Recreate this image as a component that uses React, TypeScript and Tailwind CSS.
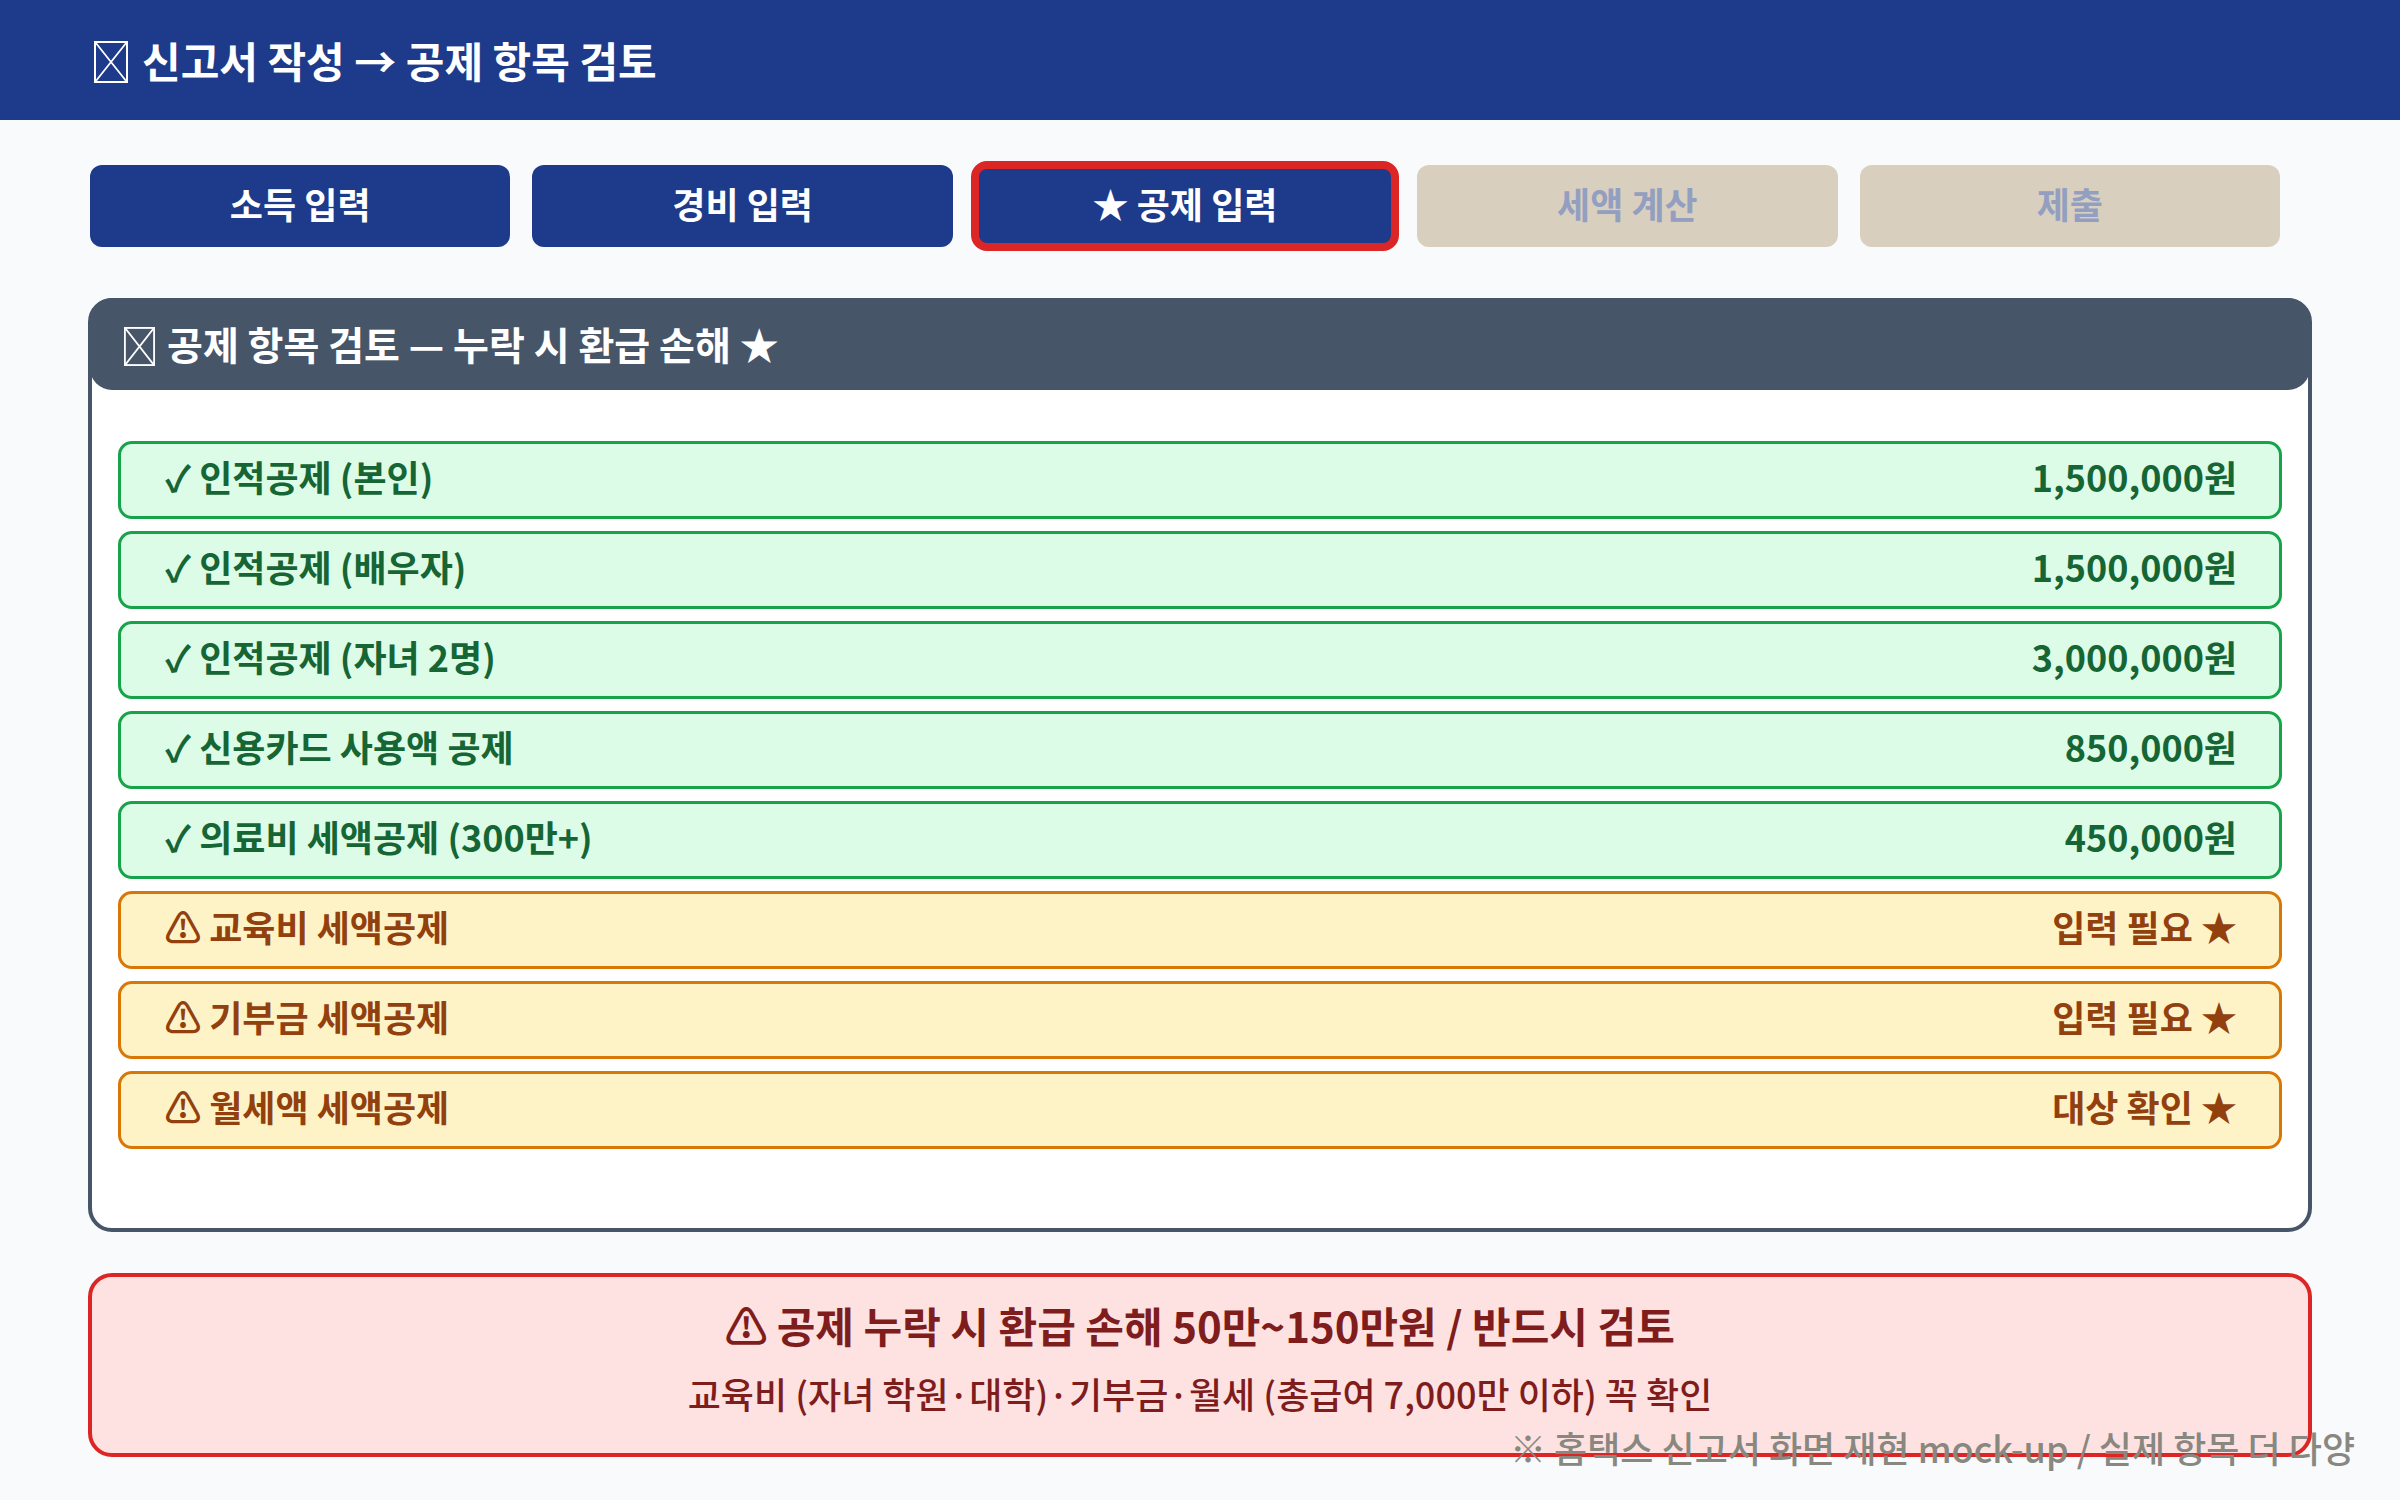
type Step = { label: string; state: "done" | "current" | "todo" };
type Deduction = { label: string; value: string; ok: boolean };

const steps: Step[] = [
  { label: "소득 입력", state: "done" },
  { label: "경비 입력", state: "done" },
  { label: "★ 공제 입력", state: "current" },
  { label: "세액 계산", state: "todo" },
  { label: "제출", state: "todo" },
];

const deductions: Deduction[] = [
  { label: "✓ 인적공제 (본인)", value: "1,500,000원", ok: true },
  { label: "✓ 인적공제 (배우자)", value: "1,500,000원", ok: true },
  { label: "✓ 인적공제 (자녀 2명)", value: "3,000,000원", ok: true },
  { label: "✓ 신용카드 사용액 공제", value: "850,000원", ok: true },
  { label: "✓ 의료비 세액공제 (300만+)", value: "450,000원", ok: true },
  { label: "⚠ 교육비 세액공제", value: "입력 필요 ★", ok: false },
  { label: "⚠ 기부금 세액공제", value: "입력 필요 ★", ok: false },
  { label: "⚠ 월세액 세액공제", value: "대상 확인 ★", ok: false },
];

const stepStyles = {
  done: "bg-[#1e3a8a] text-white",
  current: "bg-[#1e3a8a] text-white outline-8 -outline-offset-4 outline-[#dc2626]",
  todo: "bg-[#d9cfbe] text-[#929fc0]",
};

function CrossedBox({ className }: { className: string }) {
  return (
    <svg viewBox="0 0 34 42" preserveAspectRatio="none" fill="none" stroke="currentColor" className={className} aria-hidden="true">
      <rect x="1" y="1" width="32" height="40" strokeWidth="2" />
      <path d="M1.5 1.5 32.5 40.5M32.5 1.5 1.5 40.5" strokeWidth="1.8" />
    </svg>
  );
}

export default function App() {
  return (
    <div className="relative min-h-screen bg-[#f9fafc] font-['Noto_Sans_CJK_KR',sans-serif]">
      <header className="flex h-[120px] items-center bg-[#1e3a8a] px-[94px] text-white">
        <h1 className="flex items-center gap-[14px] text-[42px] leading-[60px] font-bold">
          <CrossedBox className="mt-1 h-[42px] w-[34px]" />
          신고서 작성 → 공제 항목 검토
        </h1>
      </header>

      <nav className="mt-[45px] mr-[120px] ml-[90px] grid grid-cols-5 gap-[22px]" aria-label="신고 단계">
        {steps.map((s) => (
          <button
            key={s.label}
            type="button"
            disabled={s.state === "todo"}
            aria-current={s.state === "current" ? "step" : undefined}
            className={`h-[82px] rounded-xl pb-1.5 text-[36px] leading-[52px] font-bold ${stepStyles[s.state]}`}
          >
            {s.label}
          </button>
        ))}
      </nav>

      <main className="px-[88px]">
        <section className="mt-[51px] rounded-[24px] border-4 border-[#475569] bg-white">
          <h2 className="-mx-[2px] -mt-1 flex h-[92px] items-center gap-3 rounded-[22px] bg-[#475569] px-[34px] pt-1 text-[39px] leading-[56px] font-bold text-white">
            <CrossedBox className="h-[39px] w-[31px]" />
            <span className="pb-1.5">공제 항목 검토 — 누락 시 환급 손해 ★</span>
          </h2>
          <ul className="flex flex-col gap-3 px-[26px] pt-[51px] pb-[79px]">
            {deductions.map((d) => (
              <li
                key={d.label}
                className={`flex h-[78px] items-center justify-between rounded-[14px] border-3 pr-[42px] pb-2 pl-[44px] text-[36px] leading-[52px] font-bold ${
                  d.ok
                    ? "border-[#16a34a] bg-[#dcfce7] text-[#166534]"
                    : "border-[#d97706] bg-[#fef3c7] text-[#92400e]"
                }`}
              >
                <span>{d.label}</span>
                <span>{d.value}</span>
              </li>
            ))}
          </ul>
        </section>

        <section className="mt-[41px] flex h-[184px] flex-col items-center rounded-[24px] border-4 border-[#dc2626] bg-[#fee2e2] pt-[18px] text-[#7f1d1d]">
          <p className="text-[42px] leading-[60px] font-bold">⚠ 공제 누락 시 환급 손해 50만~150만원 / 반드시 검토</p>
          <p className="mt-3 text-[36px] leading-[52px] font-medium">교육비 (자녀 학원·대학)·기부금·월세 (총급여 7,000만 이하) 꼭 확인</p>
        </section>
      </main>

      <p className="absolute right-[45px] bottom-[27px] text-[36px] leading-[52px] font-medium text-[#888780]">
        ※ 홈택스 신고서 화면 재현 mock-up / 실제 항목 더 다양
      </p>
    </div>
  );
}
